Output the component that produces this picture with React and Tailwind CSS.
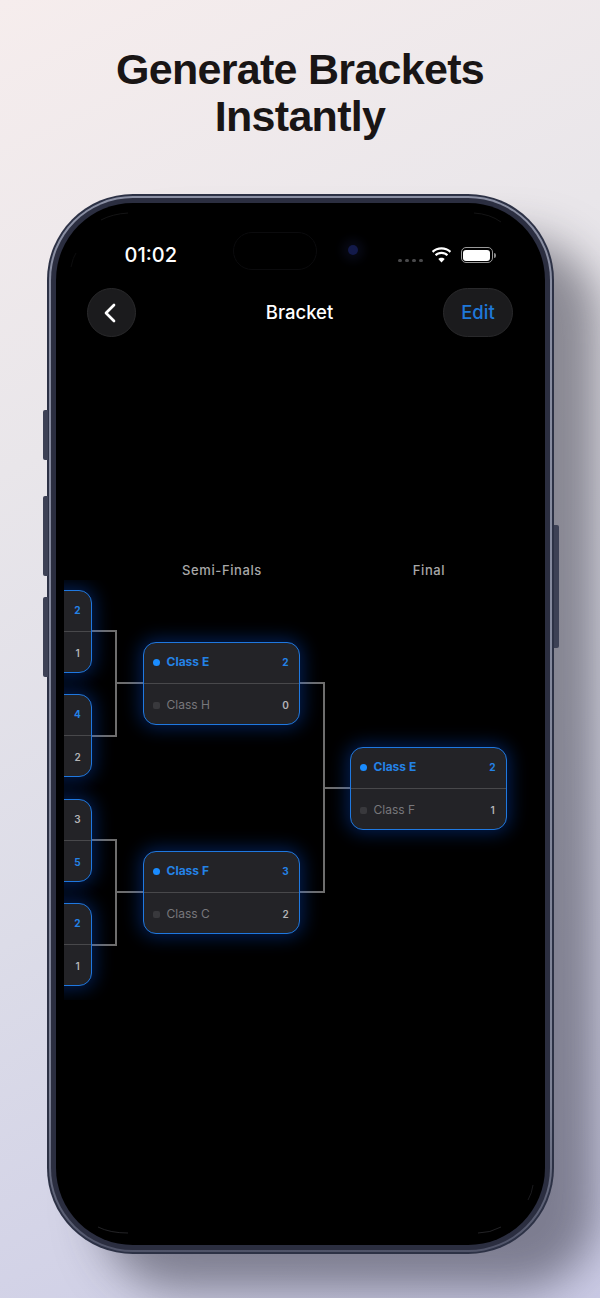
import React from 'react';
import { ChevronLeft } from 'lucide-react';

const matches = [
  { id: 'qf1', pos: 'left-[-129px] top-[10px]', top: { score: 2, won: true }, bottom: { score: 1 } },
  { id: 'qf2', pos: 'left-[-129px] top-[114px]', top: { score: 4, won: true }, bottom: { score: 2 } },
  { id: 'qf3', pos: 'left-[-129px] top-[219px]', top: { score: 3 }, bottom: { score: 5, won: true } },
  { id: 'qf4', pos: 'left-[-129px] top-[323px]', top: { score: 2, won: true }, bottom: { score: 1 } },
  { id: 'sf1', pos: 'left-[79px] top-[62px]', top: { name: 'Class E', score: 2, won: true }, bottom: { name: 'Class H', score: 0 } },
  { id: 'sf2', pos: 'left-[79px] top-[271px]', top: { name: 'Class F', score: 3, won: true }, bottom: { name: 'Class C', score: 2 } },
  { id: 'final', pos: 'left-[286px] top-[167px]', top: { name: 'Class E', score: 2, won: true }, bottom: { name: 'Class F', score: 1 } },
];

// connector segments between the rounds
const lines = [
  'left-[28px] top-[50px] w-[25px] h-[2px]',
  'left-[28px] top-[155px] w-[25px] h-[2px]',
  'left-[51px] top-[50px] w-[2px] h-[107px]',
  'left-[53px] top-[102px] w-[26px] h-[2px]',
  'left-[28px] top-[259px] w-[25px] h-[2px]',
  'left-[28px] top-[364px] w-[25px] h-[2px]',
  'left-[51px] top-[259px] w-[2px] h-[107px]',
  'left-[53px] top-[311px] w-[26px] h-[2px]',
  'left-[235px] top-[102px] w-[25px] h-[2px]',
  'left-[235px] top-[311px] w-[25px] h-[2px]',
  'left-[259px] top-[102px] w-[2px] h-[211px]',
  'left-[260px] top-[207px] w-[26px] h-[2px]',
];

function TeamRow({ team, className }) {
  return (
    <div className={`flex h-[40px] items-center pl-[9px] pr-[9px] ${className}`}>
      {team.name && (
        <>
          <span className={team.won ? 'h-[7px] w-[7px] rounded-full bg-[#1a8cff]' : 'h-[7px] w-[7px] rounded-[2px] bg-[#38383c]'} />
          <span className={team.won ? 'ml-[7px] text-[12px] font-bold text-[#2482e6]' : 'ml-[7px] text-[12px] font-normal text-[#77777b]'}>
            {team.name}
          </span>
        </>
      )}
      <span className={team.won ? 'ml-auto w-[8px] text-center text-[10px] font-bold text-[#2482e6]' : 'ml-auto w-[8px] text-center text-[10px] font-semibold text-[#b4b4b6]'}>
        {team.score}
      </span>
    </div>
  );
}

function MatchCard({ match }) {
  return (
    <div className={`absolute ${match.pos} w-[157px] h-[83px] overflow-hidden rounded-[13px] border-[1.5px] border-[#1f78e0] bg-[#232327] shadow-[0_0_18px_3px_rgba(10,95,255,0.33)]`}>
      <TeamRow team={match.top} className="pb-[2px]" />
      <div className="h-[1px] bg-[#48484b]" />
      <TeamRow team={match.bottom} className="pt-[2px]" />
    </div>
  );
}

function WifiIcon() {
  return (
    <svg width="21" height="16" viewBox="0 0 21 16" fill="white">
      <path d="M10.5 2.6c3.2 0 6 1.2 8.2 3.2l1.5-1.7C17.600 1.700 14.200.2 10.500.2S3.400 1.700.8 4.100l1.500 1.700c2.200-2 5-3.200 8.200-3.200z" />
      <path d="M10.500 7.100c2 0 3.800.8 5.100 2l1.600-1.700c-1.800-1.600-4.100-2.600-6.700-2.600s-4.900 1-6.700 2.600l1.600 1.700c1.300-1.200 3.100-2 5.100-2z" />
      <path d="M10.500 15.600l3.200-3.500c-.8-.8-2-1.300-3.200-1.300s-2.400.5-3.200 1.300z" />
    </svg>
  );
}

function Battery() {
  return (
    <div className="flex items-center">
      <div className="h-[16px] w-[32px] rounded-[5px] border border-[#9a9a9a] p-[1.5px]">
        <div className="h-full w-full rounded-[3px] bg-white" />
      </div>
      <div className="ml-[1px] h-[5px] w-[2px] rounded-r-full bg-[#8a8a8a]" />
    </div>
  );
}

function CornerGlints() {
  return (
    <svg className="pointer-events-none absolute inset-0" width="491" height="1042" viewBox="0 0 491 1042" fill="none" stroke="#4a4a50" strokeWidth="0.6">
      <path d="M45 17 Q 56 11 72 10" opacity="0.45" />
      <path d="M15 64 Q 17 54 20 50" opacity="0.3" />
      <path d="M418 10 Q 434 11 445 19" opacity="0.45" />
      <path d="M42 1024 Q 54 1030 72 1030" opacity="0.8" />
      <path d="M472 997 Q 476 990 477 982" opacity="0.6" />
      <path d="M445 1024 Q 434 1030 422 1030" opacity="0.8" />
    </svg>
  );
}

function Bracket() {
  return (
    <div className="relative ml-[8px] h-[420px] overflow-hidden">
      {lines.map((pos) => (
        <div key={pos} className={`absolute ${pos} bg-[#6e6e6e]`} />
      ))}
      {matches.map((m) => (
        <MatchCard key={m.id} match={m} />
      ))}
    </div>
  );
}

export default function App() {
  return (
    <div className="relative h-[1298px] w-[600px] overflow-hidden bg-[linear-gradient(155deg,#f6eded_0%,#e9e6ea_30%,#dcdce8_60%,#cbcbe6_100%)] font-['Inter',sans-serif]">
      <h1 className="pt-[46px] text-center font-['Liberation_Sans',sans-serif] text-[43px] font-bold leading-[47px] tracking-[-0.7px] text-[#191515]">
        Generate Brackets
        <br />
        Instantly
      </h1>

      <div className="relative mx-auto mt-[54px] h-[1060px] w-[507px]">
        {/* side buttons */}
        <div className="absolute left-[-4px] top-[216px] h-[50px] w-[5px] rounded-l-[2px] bg-[#3d4155]" />
        <div className="absolute left-[-4px] top-[302px] h-[80px] w-[5px] rounded-l-[2px] bg-[#3d4155]" />
        <div className="absolute left-[-4px] top-[403px] h-[80px] w-[5px] rounded-l-[2px] bg-[#3d4155]" />
        <div className="absolute right-[-5px] top-[331px] h-[123px] w-[5px] rounded-r-[2px] bg-[#3d4155]" />

        <div className="h-full rounded-[86px] bg-[#2c3145] p-[2px] shadow-[48px_40px_44px_-4px_rgba(45,45,60,0.5)]">
          <div className="h-full rounded-[84px] bg-[linear-gradient(180deg,#8a8fa3_0%,#7d8296_85%,#4f5368_100%)] p-[2px]">
            <div className="h-full rounded-[82px] bg-[#2b2e40] p-[5px]">
              <div className="relative h-full overflow-hidden rounded-[77px] bg-black">
                <CornerGlints />

                {/* dynamic island + camera */}
                <div className="absolute left-[177px] top-[29px] h-[38px] w-[84px] rounded-full border border-[#0b0b0d]" />
                <div className="absolute left-[292px] top-[42px] h-[10px] w-[10px] rounded-full bg-[#131a4a] shadow-[0_0_10px_6px_rgba(20,25,60,0.35)]" />

                <div className="mt-[33px] flex h-[38px] items-center justify-between pl-[69px] pr-[49px]">
                  <span className="text-[20px] font-medium leading-none text-white">01:02</span>
                  <div className="flex items-center">
                    <div className="mr-[8px] mt-[11px] flex gap-[3.5px]">
                      <span className="h-[3.5px] w-[3.5px] rounded-full bg-[#4a4a4c]" />
                      <span className="h-[3.5px] w-[3.5px] rounded-full bg-[#4a4a4c]" />
                      <span className="h-[3.5px] w-[3.5px] rounded-full bg-[#4a4a4c]" />
                      <span className="h-[3.5px] w-[3.5px] rounded-full bg-[#4a4a4c]" />
                    </div>
                    <WifiIcon />
                    <div className="ml-[9px]">
                      <Battery />
                    </div>
                  </div>
                </div>

                <div className="mt-[14px] grid grid-cols-[1fr_auto_1fr] items-center pl-[31px] pr-[32px]">
                  <div className="flex h-[49px] w-[49px] items-center justify-center rounded-full border border-[#29292b] bg-[#1b1b1d]">
                    <ChevronLeft size={32} strokeWidth={2} color="white" className="mr-[3px]" />
                  </div>
                  <span className="pt-[1px] text-[18.5px] font-medium text-white">Bracket</span>
                  <div className="flex h-[49px] w-[70px] items-center justify-center justify-self-end rounded-full border border-[#29292b] bg-[#1b1b1d] pl-[1px] pt-[1px] text-[18.5px] font-medium text-[#1f78d8]">
                    Edit
                  </div>
                </div>

                <div className="mt-[224px] flex h-[19px] items-center gap-[50px] pl-[88px] text-[13px] font-medium tracking-[0.6px] text-[#a8a8a8]">
                  <span className="w-[157px] text-center">Semi-Finals</span>
                  <span className="w-[157px] text-center">Final</span>
                </div>

                <Bracket />
              </div>
            </div>
          </div>
        </div>
      </div>
    </div>
  );
}
